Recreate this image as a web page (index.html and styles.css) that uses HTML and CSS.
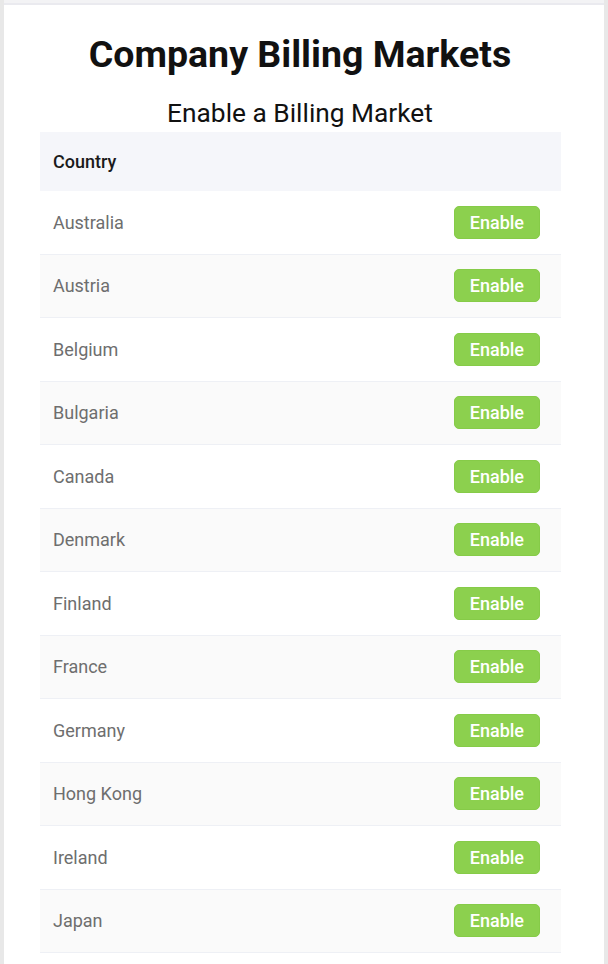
FILE: index.html
```html
<!DOCTYPE html>
<html lang="en">
<head>
<meta charset="utf-8">
<title>Company Billing Markets</title>
<link rel="stylesheet" href="styles.css">
</head>
<body>
<div class="panel">
  <div class="topstrip"></div>
  <h1 class="title">Company Billing Markets</h1>
  <h2 class="subtitle">Enable a Billing Market</h2>
  <div class="table">
    <div class="thead">Country</div>
    <div class="row"><span class="country">Australia</span><button class="btn">Enable</button></div>
    <div class="row"><span class="country">Austria</span><button class="btn">Enable</button></div>
    <div class="row"><span class="country">Belgium</span><button class="btn">Enable</button></div>
    <div class="row"><span class="country">Bulgaria</span><button class="btn">Enable</button></div>
    <div class="row"><span class="country">Canada</span><button class="btn">Enable</button></div>
    <div class="row"><span class="country">Denmark</span><button class="btn">Enable</button></div>
    <div class="row"><span class="country">Finland</span><button class="btn">Enable</button></div>
    <div class="row"><span class="country">France</span><button class="btn">Enable</button></div>
    <div class="row"><span class="country">Germany</span><button class="btn">Enable</button></div>
    <div class="row"><span class="country">Hong Kong</span><button class="btn">Enable</button></div>
    <div class="row"><span class="country">Ireland</span><button class="btn">Enable</button></div>
    <div class="row"><span class="country">Japan</span><button class="btn">Enable</button></div>
  </div>
</div>
</body>
</html>
```
FILE: styles.css
```css
html, body {
  margin: 0;
  padding: 0;
}
body {
  background: #e8e8e8;
  font-family: Roboto, "Liberation Sans", sans-serif;
  height: 964px;
  overflow: hidden;
}
.panel {
  margin: 0 4px;
  background: #ffffff;
  min-height: 964px;
}
.topstrip {
  height: 3px;
  background: #f3f3f5;
  border-bottom: 2px solid #eaeaef;
}
.title {
  margin: 27px 0 0;
  font-size: 37.5px;
  line-height: 44px;
  font-weight: 700;
  color: #111;
  text-align: center;
  padding-right: 8px;
}
.subtitle {
  margin: 21px 0 0;
  font-size: 26.3px;
  line-height: 32px;
  font-weight: 400;
  color: #111;
  text-align: center;
  padding-right: 8px;
}
.table {
  margin: 3px 0 0 36px;
  width: 521px;
}
.thead {
  height: 59px;
  background: #f5f6fa;
  display: flex;
  align-items: center;
  padding-left: 13px;
  font-size: 18px;
  font-weight: 500;
  color: #1a1a1a;
}
.row {
  height: 62.5px;
  border-bottom: 1px solid #eef0f5;
  display: flex;
  align-items: center;
  justify-content: space-between;
  padding: 0 21px 0 13px;
  background: #ffffff;
}
.row:nth-child(odd) {
  background: #fafafa;
}
.country {
  font-size: 18px;
  color: #6e6e6e;
}
.btn {
  font-family: Roboto, "Liberation Sans", sans-serif;
  font-size: 18px;
  font-weight: 500;
  color: #ffffff;
  background: #8cd04e;
  border: 1px solid #86cb48;
  border-radius: 5px;
  height: 33px;
  padding: 0 15px;
  line-height: 31px;
}
```
